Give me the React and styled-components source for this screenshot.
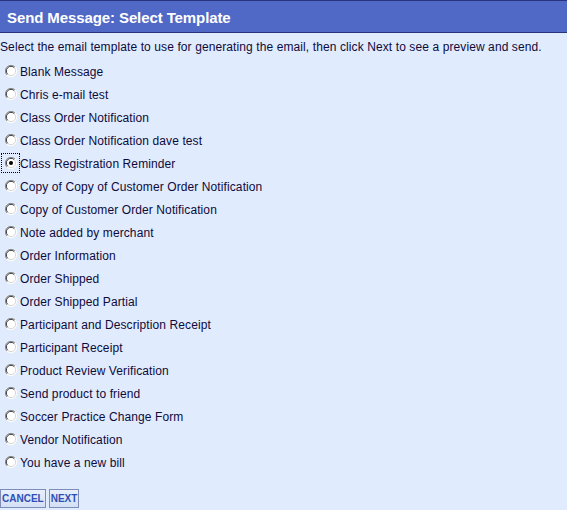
import React, { useState } from "react";
import styled, { createGlobalStyle } from "styled-components";

const Global = createGlobalStyle`
  html, body { margin: 0; padding: 0; background: #e0ecfd; }
  body { font-family: Arial, "Liberation Sans", sans-serif; }
`;

const Page = styled.div`
  width: 567px;
  height: 510px;
  background: #e0ecfd;
  overflow: hidden;
`;

const Header = styled.div`
  height: 30px;
  border-top: 1px solid #27337e;
  border-bottom: 1px solid #27337e;
  background: #5169c6;
  display: flex;
  align-items: center;
  padding-left: 7px;
  padding-top: 1px;
  color: #ffffff;
  font-weight: bold;
  font-size: 15px;
  letter-spacing: -0.1px;
`;

const Intro = styled.div`
  margin-top: 6px;
  font-size: 12px;
  line-height: 16px;
  height: 16px;
  color: #0f0a3c;
  letter-spacing: 0.1px;
  white-space: nowrap;
`;

const List = styled.div`
  margin-top: 5px;
  display: flex;
  flex-direction: column;
`;

const Item = styled.label`
  height: 23px;
  display: flex;
  align-items: center;
  font-size: 12px;
  color: #0f0a3c;
  letter-spacing: 0.1px;
  cursor: default;
`;

const Focus = styled.span`
  display: inline-flex;
  margin-left: 1px;
  padding: 3px 2px 3px 3px;
  border: 1px dotted ${(p) => (p.$focus ? "#000" : "transparent")};
  margin-top: -2px;
`;

const Actions = styled.div`
  margin-top: 15px;
  display: flex;
  gap: 3px;
`;

const Button = styled.button`
  margin: 0;
  height: 19px;
  padding: 0 1px;
  border: 1px solid #7d8db8;
  background: linear-gradient(#e8effc, #d4e0f5);
  color: #2f4fb4;
  font-family: Arial, "Liberation Sans", sans-serif;
  font-weight: bold;
  font-size: 10px;
  line-height: 17px;
  cursor: pointer;
`;

function Radio({ checked }) {
  return (
    <svg width="12" height="12" viewBox="0 0 12 12">
      <circle cx="6" cy="6" r="5.5" fill="#ffffff" />
      <path d="M10 2 A5.5 5.5 0 0 0 2 10" fill="none" stroke="#8a8a8a" strokeWidth="1" />
      <path d="M9.3 2.7 A4.6 4.6 0 0 0 2.7 9.3" fill="none" stroke="#3a3a3a" strokeWidth="1" />
      <path d="M2 10 A5.5 5.5 0 0 0 10 2" fill="none" stroke="#ffffff" strokeWidth="1" />
      <path d="M2.7 9.3 A4.6 4.6 0 0 0 9.3 2.7" fill="none" stroke="#d8d6cf" strokeWidth="1" />
      {checked && <circle cx="6" cy="6" r="2" fill="#000" />}
    </svg>
  );
}

const templates = [
  "Blank Message",
  "Chris e-mail test",
  "Class Order Notification",
  "Class Order Notification dave test",
  "Class Registration Reminder",
  "Copy of Copy of Customer Order Notification",
  "Copy of Customer Order Notification",
  "Note added by merchant",
  "Order Information",
  "Order Shipped",
  "Order Shipped Partial",
  "Participant and Description Receipt",
  "Participant Receipt",
  "Product Review Verification",
  "Send product to friend",
  "Soccer Practice Change Form",
  "Vendor Notification",
  "You have a new bill",
];

export default function App() {
  const [sel, setSel] = useState(4);
  return (
    <Page>
      <Global />
      <Header>Send Message: Select Template</Header>
      <Intro>
        Select the email template to use for generating the email, then click Next to see a preview and send.
      </Intro>
      <List>
        {templates.map((t, i) => (
          <Item key={t} onClick={() => setSel(i)}>
            <Focus $focus={sel === i}>
              <Radio checked={sel === i} />
            </Focus>
            {t}
          </Item>
        ))}
      </List>
      <Actions>
        <Button>CANCEL</Button>
        <Button>NEXT</Button>
      </Actions>
    </Page>
  );
}
